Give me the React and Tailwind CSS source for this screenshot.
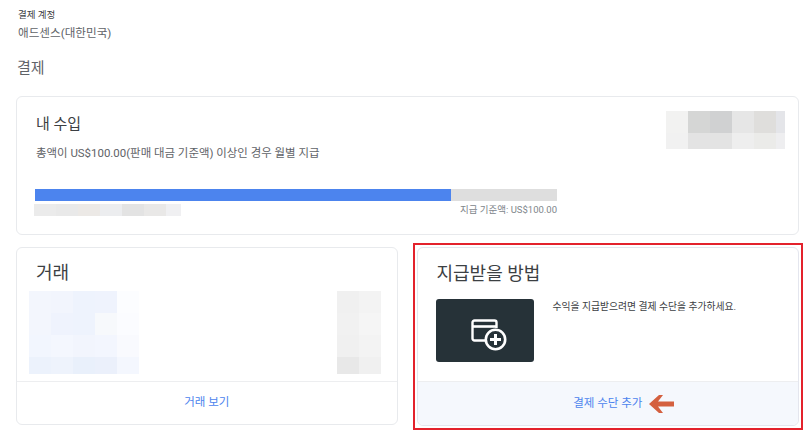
const Cell = ({ c }) => <div className={c} />;

function App() {
  const topMosaic = [
    "bg-[#f2f2f1]", "bg-[#d5d6d5]", "bg-[#d0d1d2]", "bg-[#e6e6e6]", "bg-[#dfdedc]", "bg-[#e4e5e9]",
    "bg-[#f1f1f1]", "bg-[#e3e3e3]", "bg-[#e3e3e3]", "bg-[#eeeeee]", "bg-[#ebebe9]", "bg-[#eeeef0]",
  ];
  const barMosaic = ["bg-[#ebebeb]", "bg-[#e9e9e9]", "bg-[#ece9e6]", "bg-[#ecedef]", "bg-[#e3e3e3]", "bg-[#e9e8e7]", "bg-[#f0f0f2]"];
  const leftMosaic = [
    "bg-[#f3f6fd]", "bg-[#f2f5fd]", "bg-[#eef3fd]", "bg-[#eff3fd]", "bg-[#fcfdff]",
    "bg-[#f3f6fd]", "bg-[#eff3fd]", "bg-[#eef3fd]", "bg-[#f7f9fc]", "bg-[#fbfcff]",
    "bg-[#f2f6fe]", "bg-[#f4f7fe]", "bg-[#f2f5fd]", "bg-[#f3f6fe]", "bg-[#f9fafe]",
    "bg-[#ecf2fc]", "bg-[#eef3fc]", "bg-[#e9f0fb]", "bg-[#ebf0fb]", "bg-[#f4f7fe]",
  ];
  const rightMosaic = [
    "bg-[#f0f0f0]", "bg-[#f3f3f3]",
    "bg-[#f1f1f1]", "bg-[#f5f5f5]",
    "bg-[#f0f0f0]", "bg-[#f3f3f3]",
    "bg-[#e8e8e8]", "bg-[#f0f0f0]",
  ];

  return (
    <div className="w-[811px] h-[438px] overflow-hidden bg-white pl-4 pr-[8px] pt-[10px] font-['Roboto','Noto_Sans_CJK_KR',sans-serif] text-[#3c4043]">
      <div className="pl-[2px] text-[9.5px] leading-[10px] text-[#3c4043]">결제 계정</div>
      <div className="pl-[2px] mt-[6px] text-[11.6px] leading-[15px] text-[#5f6368]">애드센스(대한민국)</div>
      <div className="pl-[1px] mt-[17px] text-[15px] leading-[20px] text-[#5f6368]">결제</div>

      <section className="mt-[18px] w-[783px] h-[139px] rounded-md border border-[#e8eaed] pl-[18px] pr-[13px] pt-[15px] flex justify-between">
        <div className="w-[522px]">
          <h2 className="pl-[1px] text-[15px] leading-[24px] text-[#3c4043]">내 수입</h2>
          <p className="pl-[1px] mt-[9px] text-[11.45px] leading-[16px] text-[#5f6368]">총액이 US$100.00(판매 대금 기준액) 이상인 경우 월별 지급</p>
          <div className="mt-[28px] h-3 bg-[#dedede]">
            <div className="h-full w-[416px] bg-[#4c84ee]" />
          </div>
          <div className="mt-[3px] flex justify-between items-center">
            <div className="-ml-[1px] grid grid-cols-[22px_22px_22px_22px_22px_22px_15px] grid-rows-[12px]">
              {barMosaic.map((c, i) => <Cell key={i} c={c} />)}
            </div>
            <span className="text-[9.5px] leading-[12px] text-[#80868b]">지급 기준액: US$100.00</span>
          </div>
        </div>
        <div className="-mt-[1px] grid grid-cols-[22px_22px_22px_22px_22px_9px] grid-rows-[22px_16px] self-start">
          {topMosaic.map((c, i) => <Cell key={i} c={c} />)}
        </div>
      </section>

      <div className="mt-[8px] flex items-start gap-[15px]">
        <section className="mt-[4px] w-[382px] h-[178px] rounded-md border border-[#e8eaed] flex flex-col">
          <div className="h-[134px] border-b border-[#edeef0] pl-[12px] pr-[16px] pt-[12px]">
            <h2 className="pl-[7px] text-[18px] leading-[25px] text-[#3c4043]">거래</h2>
            <div className="mt-[6px] flex justify-between">
              <div className="grid grid-cols-[repeat(5,22px)] grid-rows-[22px_22px_22px_17px]">
                {leftMosaic.map((c, i) => <Cell key={i} c={c} />)}
              </div>
              <div className="grid grid-cols-[repeat(2,22px)] grid-rows-[22px_22px_22px_17px]">
                {rightMosaic.map((c, i) => <Cell key={i} c={c} />)}
              </div>
            </div>
          </div>
          <div className="flex-1 flex items-center justify-center text-[11.5px] text-[#4c84ee]">거래 보기</div>
        </section>

        <div className="w-[391px] h-[187px] border-2 border-[#e3222c] p-[2px]">
          <section className="h-[179px] rounded-md border border-[#e4e6ee] flex flex-col">
            <div className="h-[134px] border-b border-[#edeef0] pl-[18px] pt-[13px]">
              <h2 className="pl-[1px] text-[18px] leading-[26px] text-[#3c4043]">지급받을 방법</h2>
              <div className="mt-[12px] flex items-start">
                <div className="w-[98px] h-[63px] rounded-[3px] bg-[#263238] flex items-center justify-center">
                  <svg width="36" height="32" viewBox="0 0 36 32" fill="none" stroke="white" strokeWidth="2.4" className="ml-[8px] mt-[9px]">
                    <path d="M14 21.5H3.5a2 2 0 0 1-2-2V3.5a2 2 0 0 1 2-2h20a2 2 0 0 1 2 2V9" />
                    <path d="M1.5 7.5h24" strokeWidth="2.6" />
                    <circle cx="24.5" cy="20.5" r="9.7" strokeWidth="2.6" />
                    <path d="M24.5 15v11M19 20.5h11" strokeWidth="3" />
                  </svg>
                </div>
                <p className="ml-[19px] mt-[1px] text-[9.8px] leading-[14px] text-[#3c4043]">수익을 지급받으려면 결제 수단을 추가하세요.</p>
              </div>
            </div>
            <div className="flex-1 rounded-b-md bg-[#f5f8fd] flex items-center justify-center">
              <span className="relative text-[11.5px] text-[#4c84ee]">
                결제 수단 추가
                <svg width="26" height="20" viewBox="0 0 26 20" className="absolute left-[76px] top-[-1px]">
                  <path d="M0 10 L10 1 H14 L9 7.5 H25 V12.5 H9 L14 19 H10 Z" fill="#d4603f" />
                </svg>
              </span>
            </div>
          </section>
        </div>
      </div>
    </div>
  );
}

export default App;
